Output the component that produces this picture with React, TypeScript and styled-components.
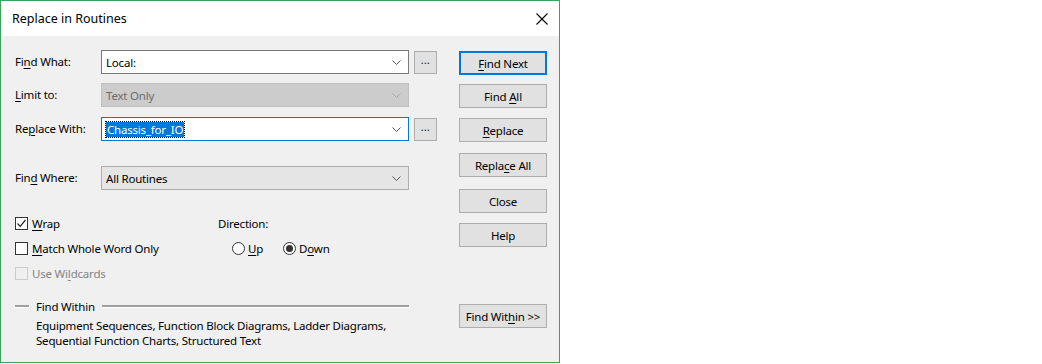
import styled, { createGlobalStyle, css } from 'styled-components';
import { FC, ReactNode } from 'react';

const GlobalStyle = createGlobalStyle`
    html, body {
        margin: 0;
        padding: 0;
        background: #ffffff;
    }
    body {
        font-family: 'Noto Sans', 'Open Sans', sans-serif;
        font-size: 11.5px;
        letter-spacing: -0.2px;
        color: #000000;
    }
`;

/*
 * Window frame
 */

const Window = styled.div`
    width: 558px;
    height: 361px;
    border: 1px solid #3f9f5c;
    display: flex;
    flex-direction: column;
    background: #f0f0f0;
`;

const TitleBar = styled.div`
    height: 35px;
    background: #ffffff;
    display: flex;
    align-items: center;
    justify-content: space-between;
    padding: 0 11px 0 11px;
    font-size: 12.5px;
    letter-spacing: 0;
`;

const CloseIcon = styled.svg`
    width: 12px;
    height: 12px;
`;

const Body = styled.div`
    flex: 1;
    display: flex;
    padding: 14px 0 0 14px;
`;

/*
 * Left part: fields
 */

const Fields = styled.div`
    width: 423px;
    display: flex;
    flex-direction: column;
`;

const FieldRow = styled.div<{ $mt?: number }>`
    display: flex;
    align-items: center;
    height: 24px;
    margin-top: ${(p) => p.$mt ?? 0}px;
`;

const Label = styled.div`
    width: 86px;
    line-height: 16px;
    padding-bottom: 1px;
`;

const U = styled.span`
    text-decoration: underline;
    text-underline-offset: 2px;
`;

type ComboKind = 'normal' | 'disabled' | 'focused' | 'list';

const Combo = styled.div<{ $kind: ComboKind }>`
    width: 308px;
    height: 24px;
    box-sizing: border-box;
    border: 1px solid #7a7a7a;
    background: #ffffff;
    display: flex;
    align-items: center;
    justify-content: space-between;
    padding: 0 4px 0 4px;
    ${(p) =>
        p.$kind === 'disabled' &&
        css`
            background: #cccccc;
            border-color: #bfbfbf;
            color: #6d6d6d;
        `}
    ${(p) =>
        p.$kind === 'focused' &&
        css`
            border-color: #0078d7;
        `}
    ${(p) =>
        p.$kind === 'list' &&
        css`
            background: #e5e5e5;
            border-color: #adadad;
        `}
`;

const Selected = styled.span`
    background: #0078d7;
    color: #ffffff;
    outline: 1px dotted #000000;
    padding: 0 1px;
    line-height: 15px;
`;

const Chevron = styled.svg`
    width: 9px;
    height: 5px;
    margin-right: 3px;
`;

const Ellipsis = styled.div`
    width: 23px;
    height: 23px;
    box-sizing: border-box;
    margin-left: 5px;
    border: 1px solid #adadad;
    background: #e1e1e1;
    display: flex;
    align-items: center;
    justify-content: center;
    padding-bottom: 4px;
    font-size: 10px;
    letter-spacing: 0.5px;
`;

const Options = styled.div`
    margin-top: 21px;
    display: grid;
    grid-template-columns: 203px 1fr;
    grid-template-rows: 25px 25px 24px;
    align-items: center;
`;

const Check = styled.label<{ $disabled?: boolean }>`
    display: flex;
    align-items: center;
    gap: 4px;
    color: ${(p) => (p.$disabled ? '#838383' : '#000000')};
`;

const Box = styled.span<{ $disabled?: boolean }>`
    width: 13px;
    height: 13px;
    box-sizing: border-box;
    border: 1px solid ${(p) => (p.$disabled ? '#cccccc' : '#333333')};
    background: ${(p) => (p.$disabled ? '#f0f0f0' : '#ffffff')};
    display: flex;
    align-items: center;
    justify-content: center;
`;

const DirectionLabel = styled.div`
    padding-left: 0;
`;

const Radios = styled.div`
    display: flex;
    align-items: center;
    padding-left: 14px;
    gap: 20px;
`;

const Radio = styled.label`
    display: flex;
    align-items: center;
    gap: 3px;
`;

const RadioCircle = styled.span<{ $on?: boolean }>`
    width: 13px;
    height: 13px;
    box-sizing: border-box;
    border-radius: 50%;
    border: 1px solid #333333;
    background: #ffffff;
    display: flex;
    align-items: center;
    justify-content: center;
    &::after {
        content: '';
        display: ${(p) => (p.$on ? 'block' : 'none')};
        width: 7px;
        height: 7px;
        border-radius: 50%;
        background: #333333;
    }
`;

const GroupHeader = styled.div`
    margin-top: 13px;
    height: 17px;
    display: flex;
    align-items: center;
    gap: 7px;
    padding-right: 29px;
`;

const Rule = styled.div<{ $grow?: boolean }>`
    height: 2px;
    background: #a0a0a0;
    border-bottom: 1px solid #ffffff;
    width: 14px;
    ${(p) =>
        p.$grow &&
        css`
            flex: 1;
        `}
`;

const Desc = styled.div`
    padding-left: 21px;
    margin-top: 3px;
    line-height: 15px;
`;

/*
 * Right part: command buttons
 */

const Buttons = styled.div`
    margin-left: 21px;
    padding-top: 1px;
    display: flex;
    flex-direction: column;
`;

const Button = styled.div<{ $default?: boolean; $mt?: number }>`
    width: 88px;
    height: 24px;
    box-sizing: border-box;
    margin-top: ${(p) => p.$mt ?? 0}px;
    border: 1px solid #adadad;
    background: #e1e1e1;
    display: flex;
    align-items: center;
    justify-content: center;
    ${(p) =>
        p.$default &&
        css`
            border: 2px solid #0078d7;
        `}
`;

const ChevronDown: FC<{ color?: string }> = ({ color = '#555555' }) => (
    <Chevron viewBox="0 0 9 5">
        <polyline points="0.5,0.5 4.5,4.5 8.5,0.5" fill="none" stroke={color} strokeWidth="1" />
    </Chevron>
);

const Field: FC<{ label: ReactNode; kind: ComboKind; mt?: number; ellipsis?: boolean; children: ReactNode }> = ({
    label,
    kind,
    mt,
    ellipsis,
    children,
}) => (
    <FieldRow $mt={mt}>
        <Label>{label}</Label>
        <Combo $kind={kind}>
            <span>{children}</span>
            <ChevronDown color={kind === 'disabled' ? '#a8a8a8' : '#555555'} />
        </Combo>
        {ellipsis && <Ellipsis>...</Ellipsis>}
    </FieldRow>
);

const App: FC = () => {
    return (
        <>
            <GlobalStyle />
            <Window>
                <TitleBar>
                    <span>Replace in Routines</span>
                    <CloseIcon viewBox="0 0 12 12">
                        <line x1="0.5" y1="0.5" x2="11.5" y2="11.5" stroke="#000" strokeWidth="1.1" />
                        <line x1="11.5" y1="0.5" x2="0.5" y2="11.5" stroke="#000" strokeWidth="1.1" />
                    </CloseIcon>
                </TitleBar>
                <Body>
                    <Fields>
                        <Field label={<>Fi<U>n</U>d What:</>} kind="normal" ellipsis>
                            Local:
                        </Field>
                        <Field label={<><U>L</U>imit to:</>} kind="disabled" mt={9}>
                            Text Only
                        </Field>
                        <Field label={<>Re<U>p</U>lace With:</>} kind="focused" mt={10} ellipsis>
                            <Selected>Chassis_for_IO</Selected>
                        </Field>
                        <Field label={<>Fin<U>d</U> Where:</>} kind="list" mt={25}>
                            All Routines
                        </Field>

                        <Options>
                            <Check>
                                <Box>
                                    <svg width="11" height="11" viewBox="0 0 11 11">
                                        <polyline points="1.5,5.5 4.2,8.3 9.5,2" fill="none" stroke="#222" strokeWidth="1.2" />
                                    </svg>
                                </Box>
                                <span>
                                    <U>W</U>rap
                                </span>
                            </Check>
                            <DirectionLabel>Direction:</DirectionLabel>
                            <Check>
                                <Box />
                                <span>
                                    <U>M</U>atch Whole Word Only
                                </span>
                            </Check>
                            <Radios>
                                <Radio>
                                    <RadioCircle />
                                    <span>
                                        <U>U</U>p
                                    </span>
                                </Radio>
                                <Radio>
                                    <RadioCircle $on />
                                    <span>
                                        D<U>o</U>wn
                                    </span>
                                </Radio>
                            </Radios>
                            <Check $disabled>
                                <Box $disabled />
                                <span>
                                    Use Wi<U>l</U>dcards
                                </span>
                            </Check>
                        </Options>

                        <GroupHeader>
                            <Rule />
                            <span>Find Within</span>
                            <Rule $grow />
                        </GroupHeader>
                        <Desc>
                            Equipment Sequences, Function Block Diagrams, Ladder Diagrams,
                            <br />
                            Sequential Function Charts, Structured Text
                        </Desc>
                    </Fields>

                    <Buttons>
                        <Button $default>
                            <span>
                                <U>F</U>ind Next
                            </span>
                        </Button>
                        <Button $mt={9}>
                            <span>
                                Find <U>A</U>ll
                            </span>
                        </Button>
                        <Button $mt={10}>
                            <span>
                                <U>R</U>eplace
                            </span>
                        </Button>
                        <Button $mt={11}>
                            <span>
                                Repla<U>c</U>e All
                            </span>
                        </Button>
                        <Button $mt={12}>Close</Button>
                        <Button $mt={10}>Help</Button>
                        <Button $mt={57}>
                            <span>
                                Find Wit<U>h</U>in &gt;&gt;
                            </span>
                        </Button>
                    </Buttons>
                </Body>
            </Window>
        </>
    );
};

export default App;
